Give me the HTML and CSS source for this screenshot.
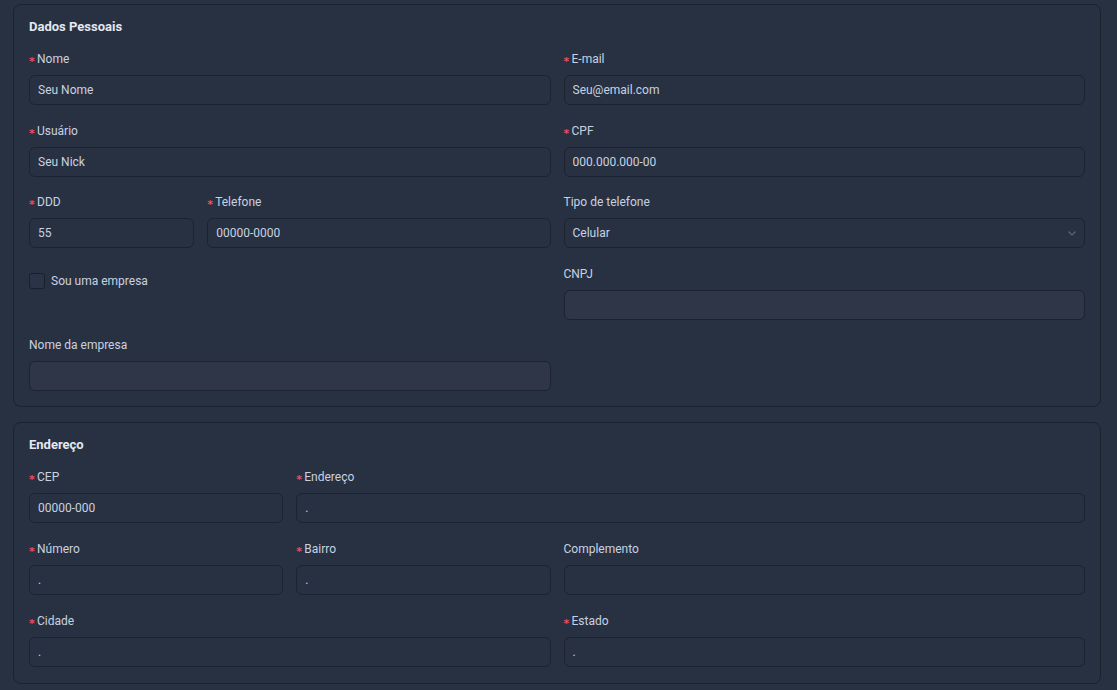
FILE: index.html
```html
<!DOCTYPE html>
<html lang="pt-BR">
<head>
  <meta charset="UTF-8" />
  <meta name="viewport" content="width=device-width, initial-scale=1.0"/>
  <title>Cadastro</title>
  <link rel="stylesheet" href="styles.css">
</head>
<body>

<div class="page">

  <section class="card">
    <h2>Dados Pessoais</h2>

    <div class="grid">
      <div class="field span-2">
        <label class="req">Nome</label>
        <input type="text" value="Seu Nome" />
      </div>
      <div class="field span-2">
        <label class="req">E-mail</label>
        <input type="text" value="Seu@email.com" />
      </div>

      <div class="field span-2">
        <label class="req">Usuário</label>
        <input type="text" value="Seu Nick" />
      </div>
      <div class="field span-2">
        <label class="req">CPF</label>
        <input type="text" value="000.000.000-00" />
      </div>

      <div class="span-2 phone">
        <div class="field">
          <label class="req">DDD</label>
          <input type="text" value="55" />
        </div>
        <div class="field">
          <label class="req">Telefone</label>
          <input type="text" value="00000-0000" />
        </div>
      </div>
      <div class="field span-2">
        <label>Tipo de telefone</label>
        <div class="select">
          <span>Celular</span>
          <svg width="10" height="10" viewBox="0 0 10 10"><path d="M1.5 3.5 L5 7 L8.5 3.5" fill="none" stroke="#5f6879" stroke-width="1.1"/></svg>
        </div>
      </div>

      <div class="field span-2 check-field">
        <label class="check"><span class="box"></span>Sou uma empresa</label>
      </div>
      <div class="field span-2">
        <label>CNPJ</label>
        <input type="text" class="disabled" disabled />
      </div>

      <div class="field span-2 last">
        <label>Nome da empresa</label>
        <input type="text" class="disabled" disabled />
      </div>
    </div>
  </section>

  <section class="card address">
    <h2>Endereço</h2>

    <div class="grid">
      <div class="field">
        <label class="req">CEP</label>
        <input type="text" value="00000-000" />
      </div>
      <div class="field span-3">
        <label class="req">Endereço</label>
        <input type="text" value="." />
      </div>

      <div class="field">
        <label class="req">Número</label>
        <input type="text" value="." />
      </div>
      <div class="field">
        <label class="req">Bairro</label>
        <input type="text" value="." />
      </div>
      <div class="field span-2">
        <label>Complemento</label>
        <input type="text" />
      </div>

      <div class="field span-2 last">
        <label class="req">Cidade</label>
        <input type="text" value="." />
      </div>
      <div class="field span-2 last">
        <label class="req">Estado</label>
        <input type="text" value="." />
      </div>
    </div>
  </section>

</div>

</body>
</html>
```

FILE: styles.css
```css
* { box-sizing: border-box; }

body {
  margin: 0;
  background: #283142;
  font-family: Roboto, "Liberation Sans", Arial, sans-serif;
  font-size: 12px;
  color: #c9d1e0;
}

.page {
  padding: 4px 16px 6px 13px;
}

.card {
  border: 1px solid #1b212d;
  border-radius: 8px;
  padding: 13px 15px 15px 15px;
  margin-bottom: 15px;
  background: #283142;
}

.card.address {
  padding-bottom: 16px;
}

.card h2 {
  margin: 0 0 15px 0;
  font-size: 13px;
  line-height: 18px;
  font-weight: bold;
  color: #e3e8f1;
}

.grid {
  display: grid;
  grid-template-columns: repeat(4, 1fr);
  column-gap: 13px;
}

.span-2 { grid-column: span 2; }
.span-3 { grid-column: span 3; }

.field {
  margin-bottom: 17.5px;
}

.address .field {
  margin-bottom: 18px;
}

.card .field.last {
  margin-bottom: 0;
}

.field label {
  display: block;
  line-height: 16px;
  height: 16px;
  margin-bottom: 8px;
  color: #c9d1e0;
}

.req::before {
  content: "*";
  display: inline-block;
  width: 8px;
  color: #ec4d63;
  font-family: "DejaVu Sans", sans-serif;
  font-weight: bold;
  font-size: 11px;
  position: relative;
  top: 2px;
}

input[type="text"] {
  display: block;
  width: 100%;
  height: 30px;
  padding: 0 8px;
  font-family: inherit;
  font-size: 12px;
  color: #c9d1e0;
  background: #283142;
  border: 1px solid #1c2230;
  border-radius: 6px;
  outline: none;
}

input.disabled {
  background: #2e3647;
}

.phone {
  display: grid;
  grid-template-columns: calc((100% + 13px) / 3 - 13px) 1fr;
  column-gap: 13px;
}

.select {
  height: 30px;
  padding: 0 7px 0 8px;
  display: flex;
  align-items: center;
  justify-content: space-between;
  border: 1px solid #1c2230;
  border-radius: 6px;
  color: #c9d1e0;
}

.check-field {
  padding-top: 7px;
}

.field label.check {
  display: flex;
  align-items: center;
  gap: 6px;
  height: 16px;
  margin: 0;
}

.box {
  width: 16px;
  height: 16px;
  border: 1px solid #1a202b;
  border-radius: 3px;
  background: #2b3446;
}
```
